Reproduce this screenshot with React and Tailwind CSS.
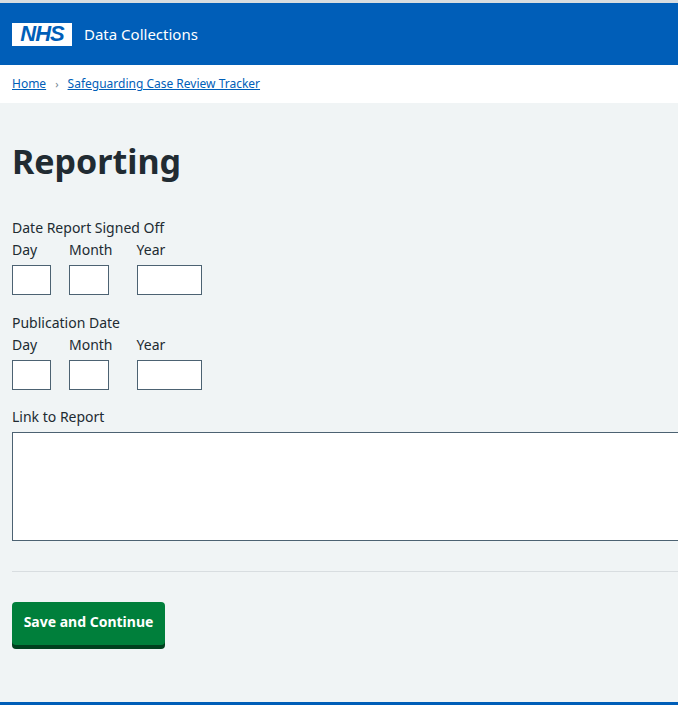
export default function App() {
  const f = { fontFamily: '"Noto Sans", "Open Sans", Arial, sans-serif' };
  const DateRow = () => (
    <div className="flex gap-[18px] mt-[2px]">
      <div className="flex flex-col"><span className="text-[14px] leading-[20px] text-[#212b32]">Day</span><input className="mt-[5px] w-[39px] h-[30px] border border-[#4c6272] bg-white" /></div>
      <div className="flex flex-col mr-[6px]"><span className="text-[14px] leading-[20px] text-[#212b32]">Month</span><input className="mt-[5px] w-[40px] h-[30px] border border-[#4c6272] bg-white" /></div>
      <div className="flex flex-col"><span className="text-[14px] leading-[20px] text-[#212b32]">Year</span><input className="mt-[5px] w-[65px] h-[30px] border border-[#4c6272] bg-white" /></div>
    </div>
  );
  return (
    <div style={f} className="w-[678px] h-[705px] overflow-hidden bg-[#f0f4f5] flex flex-col">
      <div className="h-[3px] bg-[#d8dde0]" />
      <div className="h-[62px] bg-[#005eb8] flex items-center px-[12px]">
        <div className="w-[60px] h-[23px] bg-white flex items-center justify-center">
          <span className="text-[#005eb8] font-black italic text-[22px] leading-none tracking-[-1px]" style={{ fontFamily: '"Liberation Sans", Arial, sans-serif' }}>NHS</span>
        </div>
        <span className="ml-[12px] text-white text-[15px]">Data Collections</span>
      </div>
      <div className="h-[38px] bg-white flex items-center px-[12px] text-[12px] text-[#005eb8]">
        <a className="underline">Home</a>
        <span className="mx-[9px] text-[#768692] text-[11px]">›</span>
        <a className="underline">Safeguarding Case Review Tracker</a>
      </div>
      <div className="px-[12px] pt-[36px] flex-1">
        <h1 className="text-[34px] font-bold leading-[44px] text-[#212b32]">Reporting</h1>
        <div className="mt-[35px] text-[14px] leading-[20px] text-[#212b32]">Date Report Signed Off</div>
        <DateRow />
        <div className="mt-[18px] text-[14px] leading-[20px] text-[#212b32]">Publication Date</div>
        <DateRow />
        <div className="mt-[17px] text-[14px] leading-[20px] text-[#212b32]">Link to Report</div>
        <textarea className="mt-[5px] block w-[680px] h-[109px] border border-[#4c6272] bg-white resize-none" />
        <div className="mt-[30px] h-px bg-[#d8dde0] w-[680px]" />
        <button className="mt-[30px] w-[153px] h-[43px] bg-[#007f3b] rounded-[4px] shadow-[0_4px_0_#00401e] text-white font-bold text-[14px] pb-[4px]">Save and Continue</button>
      </div>
      <div className="h-[3px] bg-[#005eb8]" />
    </div>
  );
}
